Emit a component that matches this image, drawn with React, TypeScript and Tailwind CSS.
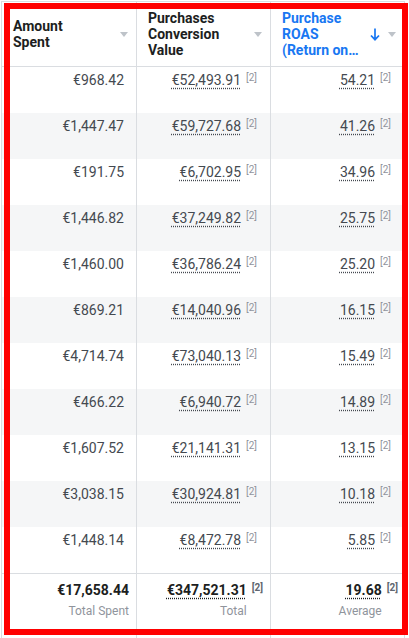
const rows = [
  ["€968.42", "€52,493.91", "54.21"],
  ["€1,447.47", "€59,727.68", "41.26"],
  ["€191.75", "€6,702.95", "34.96"],
  ["€1,446.82", "€37,249.82", "25.75"],
  ["€1,460.00", "€36,786.24", "25.20"],
  ["€869.21", "€14,040.96", "16.15"],
  ["€4,714.74", "€73,040.13", "15.49"],
  ["€466.22", "€6,940.72", "14.89"],
  ["€1,607.52", "€21,141.31", "13.15"],
  ["€3,038.15", "€30,924.81", "10.18"],
  ["€1,448.14", "€8,472.78", "5.85"],
];

function Caret() {
  return (
    <svg width="8" height="5" viewBox="0 0 8 5" className="shrink-0">
      <path d="M0 0h8L4 5z" fill="#bec3c9" />
    </svg>
  );
}

function SortArrow() {
  return (
    <svg width="10" height="13" viewBox="0 0 10 13" className="shrink-0">
      <path d="M5 0.5v11M1 7.5l4 4.2 4-4.2" stroke="#1877f2" strokeWidth="1.7" fill="none" />
    </svg>
  );
}

function HeaderCell({ label, blue, sorted, width }: { label: string; blue?: boolean; sorted?: boolean; width: string }) {
  return (
    <div className="flex h-[65px] items-center border-r border-b border-[#dadde1] pl-[11px] pr-[8px]">
      <div
        className={`${width} shrink-0 text-[14px] font-bold leading-[16px] ${blue ? "text-[#1877f2]" : "text-[#1c1e21]"}`}
      >
        {label}
      </div>
      <div className="ml-auto flex items-center gap-[8px]">
        {sorted && <SortArrow />}
        <Caret />
      </div>
    </div>
  );
}

function Ref({ bold }: { bold?: boolean }) {
  return (
    <span
      className={`ml-[5px] inline-block align-top leading-[14px] ${bold ? "text-[10px] font-bold text-[#606770]" : "text-[10px] text-[#90949c]"}`}
    >
      [2]
    </span>
  );
}

export default function App() {
  return (
    <div className="relative h-[638px] w-[409px] overflow-hidden bg-white pl-px pt-px font-['Roboto','Liberation_Sans',sans-serif]">
      <div className="grid w-max grid-cols-[135px_134px_134px] border-l border-t border-[#dadde1]">
        <HeaderCell label="Amount Spent" width="w-[78px]" />
        <HeaderCell label="Purchases Conversion Value" width="w-[96px]" />
        <HeaderCell label="Purchase ROAS (Return on…" width="w-[80px]" blue sorted />

        {rows.map((r, i) => {
          const bg = i % 2 === 1 ? "bg-[#f5f6f7]" : "bg-white";
          return [
            <div key={`a${i}`} className={`h-[46px] border-r border-[#dadde1] ${bg} pr-[12px] pt-[4px] text-right text-[14px] leading-[18px] text-[#444950]`}>
              {r[0]}
            </div>,
            <div key={`b${i}`} className={`flex h-[46px] items-start justify-end border-r border-[#dadde1] ${bg} pr-[13px] pt-[4px] text-[14px] leading-[18px] text-[#444950]`}>
              <span className="underline decoration-dotted decoration-[#444950] underline-offset-[3px]">{r[1]}</span>
              <Ref />
            </div>,
            <div key={`c${i}`} className={`flex h-[46px] items-start justify-end border-r border-[#dadde1] ${bg} pr-[13px] pt-[4px] text-[14px] leading-[18px] text-[#444950]`}>
              <span className="underline decoration-dotted decoration-[#444950] underline-offset-[3px]">{r[2]}</span>
              <Ref />
            </div>,
          ];
        })}

        <div className="h-[66px] border-r border-t border-[#dadde1] pr-[7px] pt-[7px] text-right">
          <div className="text-[14px] font-bold leading-[18px] text-[#1c1e21]">€17,658.44</div>
          <div className="mt-[2px] text-[12px] leading-[20px] text-[#90949c]">Total Spent</div>
        </div>
        <div className="flex h-[66px] justify-end border-r border-t border-[#dadde1] pr-[7px] pt-[7px]">
          <div className="text-right">
            <div className="text-[14px] font-bold leading-[18px] text-[#1c1e21] underline decoration-dotted underline-offset-[3px]">€347,521.31</div>
            <div className="mt-[2px] text-[12px] leading-[20px] text-[#90949c]">Total</div>
          </div>
          <Ref bold />
        </div>
        <div className="flex h-[66px] justify-end border-r border-t border-[#dadde1] pr-[6px] pt-[7px]">
          <div className="text-right">
            <div className="text-[14px] font-bold leading-[18px] text-[#1c1e21] underline decoration-dotted underline-offset-[3px]">19.68</div>
            <div className="mt-[2px] text-[12px] leading-[20px] text-[#90949c]">Average</div>
          </div>
          <Ref bold />
        </div>
      </div>

      <div className="pointer-events-none absolute left-[4px] top-[3px] h-[632px] w-[404px] border-[6px] border-[#ff0000]" />
    </div>
  );
}
